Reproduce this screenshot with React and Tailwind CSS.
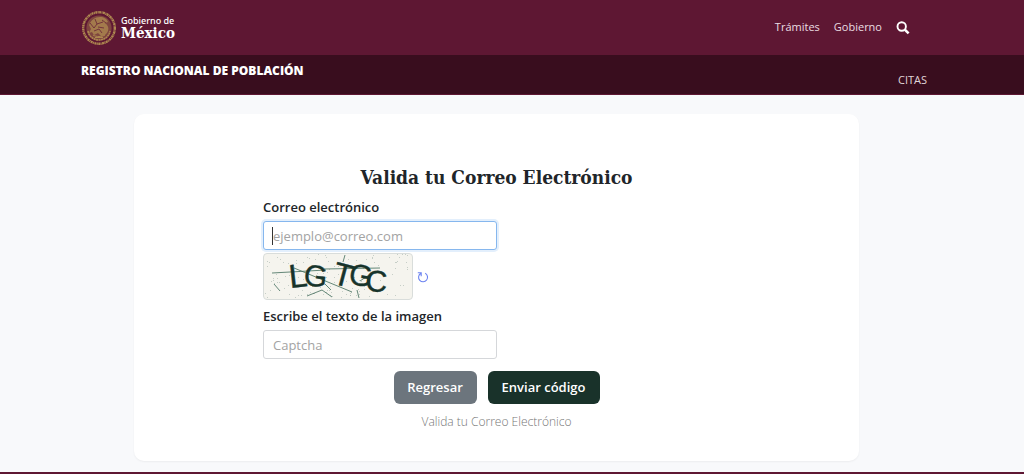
import { useState } from "react";

const navLinks = [
  { label: "Trámites", href: "#tramites" },
  { label: "Gobierno", href: "#gobierno" },
];

const captchaLetters = [
  { char: "L", x: 26, y: 34, size: 33, angle: -6 },
  { char: "G", x: 39, y: 31, size: 30, angle: 6 },
  { char: "T", x: 67, y: 29, size: 32, angle: 15 },
  { char: "G", x: 84, y: 30, size: 30, angle: 8 },
  { char: "C", x: 101, y: 37, size: 30, angle: 3 },
];

// Background noise of the captcha
const captchaDots = Array.from({ length: 130 }, (_, i) => ({
  x: Math.floor(Math.abs(Math.sin(i * 12.9898) * 43758.5) % 147),
  y: Math.floor(Math.abs(Math.sin(i * 78.233) * 12543.7) % 44),
}));

const Seal = () => (
  <svg viewBox="0 0 36 36" className="size-9 shrink-0" fill="none" stroke="#ad8750" aria-hidden="true">
    <circle cx="18" cy="18" r="15.8" strokeWidth="2.4" strokeDasharray="2 0.5 1 0.4" />
    <circle cx="18" cy="18" r="12.6" fill="#a8814d" stroke="none" opacity="0.45" />
    <path
      d="M8 15c2-5 6-8 11-8 4 0 7 2 8 5l-3 1c3 2 4 5 3 8-1 3-4 5-7 5l-3-3-4 2-2-3-3 1 2-4z"
      fill="#ad8750"
      stroke="none"
      opacity="0.8"
    />
    <path d="M9 13l4 5 3-4M14 9l2 5 6-2M17 17l6 1M13 21l5-2 3 4M21 10l4 3" stroke="#5e1733" strokeWidth="0.7" />
    <path d="M7 21c1 6 6 9 11 9s10-3 11-9" strokeWidth="1.6" strokeDasharray="2 0.5" />
    <path d="M12 25c3 2 9 2 12 0M14 27.5h8" strokeWidth="1" />
  </svg>
);

const SearchIcon = () => (
  <svg viewBox="0 0 14 14" className="size-3.5" fill="none" stroke="white" aria-hidden="true">
    <circle cx="5.7" cy="5.5" r="4.2" strokeWidth="1.9" />
    <path d="M8.8 8.6L12.6 12.4" strokeWidth="2.6" />
  </svg>
);

const Captcha = () => (
  <svg
    viewBox="0 0 148 45"
    className="h-[47px] w-[150px] rounded border border-[#d9dddb] bg-[#f5f4ee]"
    role="img"
    aria-label="Captcha"
  >
    {captchaDots.map((dot, i) => (
      <rect key={i} x={dot.x} y={dot.y} width="1" height="1" fill="#8fa097" opacity="0.45" />
    ))}
    <path
      d="M8 19L62 16M60 15L116 14M30 14L88 38M81 1L79 8M10 30L16 37M43 42L58 36L68 43M61 30L67 36M93 36L95 44M96 27L105 21"
      stroke="#3f6b59"
      strokeWidth="0.8"
      fill="none"
    />
    <g fill="#17332a" stroke="#17332a" strokeWidth="0.4" fontFamily="'Liberation Sans', sans-serif">
      {captchaLetters.map(({ char, x, y, size, angle }, i) => (
        <text key={i} x={x} y={y} fontSize={size} transform={`rotate(${angle} ${x} ${y})`}>
          {char}
        </text>
      ))}
    </g>
  </svg>
);

const Header = () => (
  <header>
    <div className="flex h-[55px] items-center justify-between bg-[#5e1733] pr-[114px] pl-[81px]">
      <a href="#inicio" className="flex items-center gap-1 text-white">
        <Seal />
        <span className="flex flex-col">
          <span className="font-['Noto_Sans'] text-[9px] leading-[10px] font-medium">Gobierno de</span>
          <span className="font-['DejaVu_Serif_Condensed','DejaVu_Serif',serif] text-[15px] leading-[14px] font-bold">
            México
          </span>
        </span>
      </a>
      <nav className="flex items-center gap-3.5 text-[11px] text-[#eadde2]">
        {navLinks.map((link) => (
          <a key={link.label} href={link.href}>
            {link.label}
          </a>
        ))}
        <button type="button" aria-label="Buscar">
          <SearchIcon />
        </button>
      </nav>
    </div>

    <div className="flex h-10 items-start justify-between border-b border-[#5e1733] bg-[#390d1e] pr-[97px] pl-[81px]">
      <span className="pt-2 text-[12px] leading-4 font-extrabold text-white">
        REGISTRO NACIONAL DE POBLACIÓN
      </span>
      <a href="#citas" className="pt-[17px] text-[11px] leading-4 text-[#e0d5d9]">
        CITAS
      </a>
    </div>
  </header>
);

export default function App() {
  const [email, setEmail] = useState("");
  const [captcha, setCaptcha] = useState("");

  return (
    <div className="min-h-screen overflow-x-hidden bg-[#f8f9fb] font-['Open_Sans','Noto_Sans',sans-serif] text-[#212529]">
      <Header />

      <main className="pt-[19px] pr-[165px] pb-[11px] pl-[134px]">
        <section className="rounded-[10px] bg-white pt-[49px] pb-[29px] shadow-xs">
          <form className="mx-auto max-w-[467px]" onSubmit={(e) => e.preventDefault()}>
            <h1 className="text-center font-['DejaVu_Serif_Condensed','DejaVu_Serif',serif] text-[19px] leading-7 font-bold">
              Valida tu Correo Electrónico
            </h1>

            <label htmlFor="email" className="mt-1 block text-[13px] leading-6 font-semibold">
              Correo electrónico
            </label>
            <div className="relative mt-0.5 w-1/2">
              <input
                id="email"
                type="email"
                value={email}
                onChange={(e) => setEmail(e.target.value)}
                placeholder="ejemplo@correo.com"
                className="block h-[29px] w-full rounded-[3px] border border-[#86b7ee] bg-white px-[9px] text-[13px] ring-2 ring-[#e3effc] outline-none placeholder:text-[#a3a3a3]"
              />
              {!email && <span className="absolute top-1.5 left-[9px] h-[18px] w-px bg-[#333]" />}
            </div>

            <div className="mt-[3px] flex items-center gap-1">
              <Captcha />
              <button type="button" aria-label="Recargar captcha" className="text-[#6c83f0]">
                <svg viewBox="0 0 12 12" className="size-3" fill="none" stroke="currentColor">
                  <path d="M8.2 2.3A4.5 4.5 0 1 1 3.6 2.5M0.8 1.8H4.2V5.2" strokeWidth="1.1" />
                </svg>
              </button>
            </div>

            <label htmlFor="captcha" className="mt-1 block text-[13px] leading-6 font-semibold">
              Escribe el texto de la imagen
            </label>
            <input
              id="captcha"
              type="text"
              value={captcha}
              onChange={(e) => setCaptcha(e.target.value)}
              placeholder="Captcha"
              className="mt-0.5 block h-[29px] w-1/2 rounded-[3px] border border-[#d5d7da] bg-white px-[9px] text-[13px] outline-none placeholder:text-[#a3a3a3]"
            />

            <div className="mt-3 flex justify-center gap-[11px] text-[13px] font-semibold text-white">
              <button type="button" className="h-[33px] w-[83px] rounded-md bg-[#6c757d]">
                Regresar
              </button>
              <button type="submit" className="h-[33px] w-[112px] rounded-md bg-[#19322a]">
                Enviar código
              </button>
            </div>

            <p className="mt-2 text-center text-[12px] leading-5 font-light text-[#777777]">
              Valida tu Correo Electrónico
            </p>
          </form>
        </section>
      </main>

      <footer className="h-0.5 bg-[#5e1733]" />
    </div>
  );
}
